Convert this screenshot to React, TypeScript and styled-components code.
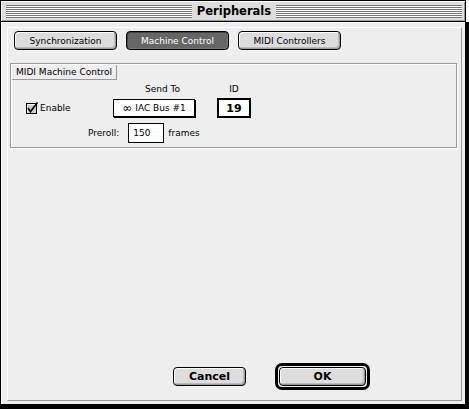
import React from 'react';
import styled, {createGlobalStyle} from 'styled-components';

const GlobalStyle = createGlobalStyle`
  html, body {
    margin: 0;
    padding: 0;
    background: #fff;
  }
  body {
    font-family: "DejaVu Sans", "Liberation Sans", sans-serif;
  }
`;

const geneva = `"DejaVu Sans", "Liberation Sans", sans-serif`;

const Window = styled.div`
  width: 469px;
  height: 409px;
  display: flex;
  flex-direction: column;
`;

const TitleBar = styled.div`
  box-sizing: border-box;
  width: 466px;
  height: 22px;
  border: 1px solid #000;
  background: #ddd;
  box-shadow: inset 1px 1px 0 #fff, inset -1px -1px 0 #999;
  display: flex;
  align-items: center;
  padding: 0 3px 0 5px;
`;

const Stripes = styled.div`
  flex: 1;
  height: 13px;
  background: repeating-linear-gradient(to bottom, #777 0 1px, #fff 1px 2px);
`;

const Title = styled.span`
  font-family: ${geneva};
  font-weight: bold;
  font-size: 11.5px;
  line-height: 13px;
  padding: 0 5px;
  color: #000;
`;

const Body = styled.div`
  flex: 1;
  box-sizing: border-box;
  display: flex;
  border-left: 1px solid #000;
  border-right: 4px solid #000;
  border-bottom: 5px solid #000;
  background: #eee;
  box-shadow: inset 1px 1px 0 #fff;
  padding: 5px 3px 3px 6px;
`;

const Panel = styled.div`
  flex: 1;
  display: flex;
  flex-direction: column;
  border: 1px solid;
  border-color: #fff #999 #999 #fff;
  background: #eee;
`;

const TabRow = styled.div`
  display: flex;
  gap: 9px;
  padding: 3px 0 0 6px;
`;

const TabButton = styled.button<{$active?: boolean}>`
  box-sizing: border-box;
  width: 103px;
  height: 19px;
  padding: 0;
  border: 1px solid #000;
  border-radius: 4px;
  font-family: ${geneva};
  font-size: 9px;
  color: ${p => (p.$active ? '#fff' : '#000')};
  background: ${p => (p.$active ? '#666' : '#ddd')};
  box-shadow: ${p =>
    p.$active
      ? 'inset 1px 1px 0 #444, inset -1px -1px 0 #777'
      : 'inset 1px 1px 0 #fff, inset -1px -1px 0 #999, inset -2px -2px 0 #bbb'};
`;

const GroupBox = styled.div`
  margin: 13px 4px 0 2px;
  border: 1px solid #999;
  box-shadow: 1px 1px 0 #fff, inset 1px 1px 0 #fff;
  display: flex;
  flex-direction: column;
  padding-bottom: 4px;
`;

const GroupLabel = styled.div`
  align-self: flex-start;
  box-sizing: border-box;
  height: 15px;
  margin: 1px 0 0 1px;
  padding: 0 4px;
  font-family: ${geneva};
  font-size: 9px;
  line-height: 14px;
  border-right: 1px solid #999;
  border-bottom: 1px solid #999;
  background: #eee;
`;

const ControlGrid = styled.div`
  display: grid;
  grid-template-columns: 102px 82px 22px 34px;
  grid-template-rows: 16px 20px;
  row-gap: 1px;
  margin-top: 1px;
  font-family: ${geneva};
  font-size: 9px;
`;

const Header = styled.div<{$pad?: number; $center?: boolean}>`
  line-height: 16px;
  padding-left: ${p => p.$pad ?? 0}px;
  text-align: ${p => (p.$center ? 'center' : 'left')};
`;

const EnableCell = styled.label`
  display: flex;
  align-items: center;
  gap: 2px;
  padding-left: 15px;
`;

const Popup = styled.div`
  align-self: center;
  box-sizing: border-box;
  height: 18px;
  border: 1px solid #000;
  box-shadow: 1px 1px 0 #000;
  background: #fff;
  display: flex;
  align-items: center;
  justify-content: center;
  gap: 3px;
`;

const Infinity = styled.span`
  font-size: 12px;
  line-height: 12px;
`;

const IdBox = styled.div`
  grid-column: 4;
  box-sizing: border-box;
  height: 20px;
  border: 2px solid #000;
  background: #fff;
  font-weight: bold;
  font-size: 11px;
  display: flex;
  align-items: center;
  justify-content: center;
`;

const PrerollRow = styled.div`
  display: flex;
  align-items: center;
  margin-top: 5px;
  padding-left: 77px;
  font-family: ${geneva};
  font-size: 9px;
`;

const NumberField = styled.div`
  box-sizing: border-box;
  width: 36px;
  height: 20px;
  margin: 0 4px 0 9px;
  padding-left: 4px;
  border: 1px solid #000;
  background: #fff;
  display: flex;
  align-items: center;
`;

const Spacer = styled.div`
  flex: 1;
`;

const ButtonRow = styled.div`
  display: flex;
  justify-content: flex-end;
  align-items: center;
  gap: 29px;
  padding: 0 91px 10px 0;
`;

const DialogButton = styled.button<{$w: number}>`
  box-sizing: border-box;
  width: ${p => p.$w}px;
  height: 19px;
  padding: 0;
  border: 1px solid #000;
  border-radius: 4px;
  background: #ddd;
  box-shadow: inset 1px 1px 0 #fff, inset -1px -1px 0 #999, inset -2px -2px 0 #bbb;
  font-family: ${geneva};
  font-weight: bold;
  font-size: 11px;
  color: #000;
`;

const OkRing = styled.div`
  display: flex;
  padding: 1px;
  border: 3px solid #000;
  border-radius: 7px;
  background: #eee;
`;

const CheckBox = () => (
  <svg width="12" height="12" viewBox="0 0 12 12">
    <rect x="0.5" y="1.5" width="10" height="10" fill="#ccc" stroke="#000"/>
    <path d="M1.5 10.5 V2.5 H9.5" stroke="#fff" fill="none"/>
    <path d="M2 6 L4.5 9.5 L11.5 0.5" stroke="#000" strokeWidth="1.7" fill="none"/>
  </svg>
);

const App: React.FC = () => {
  return (
    <>
      <GlobalStyle/>
      <Window>
        <TitleBar>
          <Stripes/>
          <Title>Peripherals</Title>
          <Stripes/>
        </TitleBar>
        <Body>
          <Panel>
            <TabRow>
              <TabButton>Synchronization</TabButton>
              <TabButton $active>Machine Control</TabButton>
              <TabButton>MIDI Controllers</TabButton>
            </TabRow>
            <GroupBox>
              <GroupLabel>MIDI Machine Control</GroupLabel>
              <ControlGrid>
                <div/>
                <Header $pad={32}>Send To</Header>
                <div/>
                <Header $center>ID</Header>
                <EnableCell><CheckBox/>Enable</EnableCell>
                <Popup><Infinity>∞</Infinity>IAC Bus #1</Popup>
                <div/>
                <IdBox>19</IdBox>
              </ControlGrid>
              <PrerollRow>
                <span>Preroll:</span>
                <NumberField>150</NumberField>
                <span>frames</span>
              </PrerollRow>
            </GroupBox>
            <Spacer/>
            <ButtonRow>
              <DialogButton $w={73}>Cancel</DialogButton>
              <OkRing>
                <DialogButton $w={87}>OK</DialogButton>
              </OkRing>
            </ButtonRow>
          </Panel>
        </Body>
      </Window>
    </>
  );
};

export default App;
